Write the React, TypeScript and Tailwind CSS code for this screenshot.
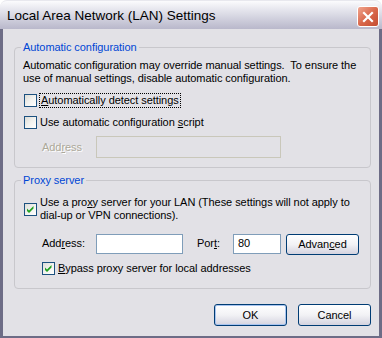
import React from "react";

const font = "font-['Liberation_Sans',Arial,sans-serif]";

function Check({ checked }: { checked?: boolean }) {
  return (
    <div className="w-[13px] h-[13px] shrink-0 border border-[#1c5180] bg-gradient-to-br from-[#dcdcd7] via-[#f2f2ef] to-white flex items-center justify-center">
      {checked && (
        <svg width="9" height="9" viewBox="0 0 9 9">
          <path d="M1 3.5 L3 5.5 L7.5 1 L7.5 3.5 L3 8 L1 6 Z" fill="#21a121" />
        </svg>
      )}
    </div>
  );
}

function Btn({ children, def }: { children: React.ReactNode; def?: boolean }) {
  return (
    <div
      className={`w-[73px] h-[22px] rounded-[3px] border border-[#003c74] bg-gradient-to-b from-white via-[#f2f2f5] to-[#d4d3df] flex items-center justify-center text-[11px] text-black ${
        def ? "shadow-[inset_0_0_0_1px_#a8c4ef]" : ""
      }`}
    >
      {children}
    </div>
  );
}

export default function App() {
  return (
    <div className={`w-[382px] h-[338px] bg-white flex flex-col ${font}`}>
      {/* Title bar */}
      <div className="h-[29px] rounded-t-[7px] bg-gradient-to-b from-[#fbfbfd] via-[#d9d9e4] to-[#b9b8cb] border-t border-[#e8e8ee] flex items-center justify-between pl-[7px] pr-[3px]">
        <span className="text-[13.5px] text-black leading-none mt-[1px]">Local Area Network (LAN) Settings</span>
        <div className="w-[22px] h-[21px] rounded-[3px] border border-white bg-gradient-to-br from-[#f0a58f] via-[#d9684c] to-[#c44a30] flex items-center justify-center mt-[3px]">
          <svg width="12" height="12" viewBox="0 0 12 12">
            <path d="M2 2 L10 10 M10 2 L2 10" stroke="white" strokeWidth="2.2" strokeLinecap="square" />
          </svg>
        </div>
      </div>

      {/* Body */}
      <div className="flex-1 border-l-[3px] border-r-[3px] border-b-[2px] border-[#6d6c86] bg-[#e2e1e6] flex flex-col pl-[11px] pr-[8px] text-[11px] leading-[13px] tracking-[-0.06px] text-black">
        {/* Group 1 */}
        <div className="relative mt-[18px] h-[121px] border border-[#c8c7cc] rounded-[4px] pl-[8px] pt-[11px]">
          <span className="absolute left-[6px] top-[-7px] px-[2px] bg-[#e2e1e6] text-[#0046d5]">Automatic configuration</span>
          <div>
            Automatic configuration may override manual settings.&nbsp; To ensure the
            <br />
            use of manual settings, disable automatic configuration.
          </div>
          <div className="mt-[8px] h-[15px] flex items-center ml-[1px]">
            <Check />
            <span className="ml-[2px] px-[1px] border border-dotted border-black leading-[13px]">
              <u>A</u>utomatically detect settings
            </span>
          </div>
          <div className="mt-[7px] h-[15px] flex items-center ml-[1px]">
            <Check />
            <span className="ml-[3px]">
              Use automatic configuration <u>s</u>cript
            </span>
          </div>
          <div className="mt-[6px] flex items-center">
            <span className="ml-[19px] w-[54px] text-[#aca899] [text-shadow:1px_1px_0_#ffffff]">
              Add<u>r</u>ess
            </span>
            <div className="w-[185px] h-[22px] border border-[#c9c7ba] bg-[#e2e1e6]" />
          </div>
        </div>

        {/* Group 2 */}
        <div className="relative mt-[12px] h-[109px] border border-[#c8c7cc] rounded-[4px] pl-[9px] pt-[15px]">
          <span className="absolute left-[6px] top-[-7px] px-[2px] bg-[#e2e1e6] text-[#0046d5]">Proxy server</span>
          <div className="flex items-center">
            <Check checked />
            <span className="ml-[3px]">
              Use a pro<u>x</u>y server for your LAN (These settings will not apply to
              <br />
              dial-up or VPN connections).
            </span>
          </div>
          <div className="mt-[10px] flex items-center">
            <span className="ml-[18px] w-[54px]">
              Add<u>r</u>ess:
            </span>
            <div className="w-[87px] h-[20px] border border-[#7f9db9] bg-white" />
            <span className="ml-[14px] w-[36px]">
              Por<u>t</u>:
            </span>
            <div className="w-[48px] h-[20px] border border-[#7f9db9] bg-white flex items-center pl-[4px]">80</div>
            <div className="ml-[5px] mt-[2px] w-[73px] h-[21px] rounded-[3px] border border-[#003c74] bg-gradient-to-b from-white via-[#f2f2f5] to-[#d4d3df] flex items-center justify-center">
              Advan<u>c</u>ed
            </div>
          </div>
          <div className="mt-[7px] flex items-center ml-[18px]">
            <Check checked />
            <span className="ml-[3px]">
              <u>B</u>ypass proxy server for local addresses
            </span>
          </div>
        </div>

        {/* Buttons */}
        <div className="mt-[15px] flex justify-end gap-[11px]">
          <Btn def>OK</Btn>
          <Btn>Cancel</Btn>
        </div>
      </div>
    </div>
  );
}
